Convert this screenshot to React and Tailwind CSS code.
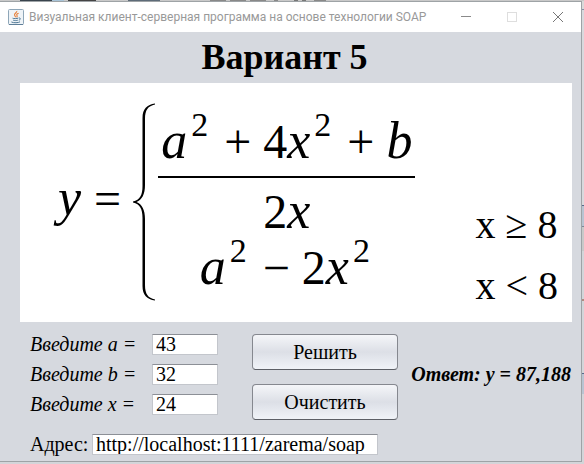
import { useState } from "react";

const FORMULA_FONT = "font-['Liberation_Serif',serif]";

function Var({ children }) {
  return <i className="text-[52px] leading-[0]">{children}</i>;
}

function Square() {
  return <sup className="static ml-1 align-[22px] text-[34px] leading-[0]">2</sup>;
}

function Op({ children }) {
  return <span className="ml-4 mr-3">{children}</span>;
}

function JavaIcon() {
  return (
    <svg width="16" height="16" viewBox="0 0 16 16" fill="none" aria-hidden="true">
      <rect x="0.5" y="0.5" width="15" height="15" rx="1" fill="#eef3f7" stroke="#8ea6b8" />
      <path d="M1 15.5H15" stroke="#5f7f99" />
      <path d="M8.8 2C9.4 3.6 5.6 4.6 6.6 6.3C6.9 6.9 7.6 7.4 7.5 8.2M10.6 4.2C8.8 4.9 8.2 5.6 9 6.5C9.5 7.1 9.2 7.7 8.5 8.2" stroke="#e8803a" strokeWidth="1.1" />
      <path d="M4.6 9.2C5.6 9.8 9 9.7 10.2 9.1M5.2 11.2C6.6 11.7 8.6 11.7 9.8 11.2M3.4 13C5.5 14.1 10.6 13.9 12 12.8M10.8 9C13 8.8 12.8 10.6 10.8 11.2" stroke="#4f7896" strokeWidth="1" />
    </svg>
  );
}

function TitleBar() {
  return (
    <header className="flex h-[30px] items-center bg-white pl-2 text-[#999]">
      <JavaIcon />
      <h2 className="ml-[5px] flex-1 whitespace-nowrap font-[Roboto,sans-serif] text-[12px]">
        Визуальная клиент-серверная программа на основе технологии SOAP
      </h2>
      <button aria-label="Свернуть" className="flex w-[46px] justify-center">
        <svg width="10" height="10" aria-hidden="true"><path d="M0 4.5H10" stroke="#8a8a8a" /></svg>
      </button>
      <button aria-label="Развернуть" disabled className="flex w-[46px] justify-center">
        <svg width="10" height="10" aria-hidden="true"><rect x="0.5" y="0.5" width="9" height="9" fill="none" stroke="#dedede" /></svg>
      </button>
      <button aria-label="Закрыть" className="flex w-[46px] justify-center">
        <svg width="10" height="10" aria-hidden="true"><path d="M0 0L10 10M10 0L0 10" stroke="#777" /></svg>
      </button>
    </header>
  );
}

function Formula() {
  return (
    <section className={`ml-5 mr-[9px] flex whitespace-nowrap bg-white pl-[38px] pr-[14px] text-[48px] leading-[52px] text-black ${FORMULA_FONT}`}>
      <div className="self-start pt-[90px]">
        <Var>y</Var>
        <span className="ml-[13px]">=</span>
      </div>
      <svg className="ml-3 mt-5 shrink-0" width="22" height="198" viewBox="0 0 22 198" aria-hidden="true">
        <path d="M22 0.5C14 1.5 9.5 6 9.5 15V83C9.5 92 7 97 0 98.5V99.5C7 101 9.5 106 9.5 115V183C9.5 192 14 196.500 22 197.500V196.500C15 195 12 191 12 182V116C12 107 9 101 3.500 99C9 97 12 91 12 82V16C12 7 15 3 22 1.500Z" fill="#000" />
      </svg>
      <div className="ml-[3px] pb-7 pt-[33px] text-center">
        <div className="border-b-2 border-black px-[3px] pb-2">
          <Var>a</Var><Square /><Op>+</Op>4<Var>x</Var><Square /><Op>+</Op><Var>b</Var>
        </div>
        <div className="mt-2">2<Var>x</Var></div>
        <div className="mt-1 pr-1">
          <Var>a</Var><Square /><Op>−</Op>2<Var>x</Var><Square />
        </div>
      </div>
      <div className="ml-auto flex flex-col justify-end pb-[6px] text-[40px] leading-[61px]">
        <p>x ≥ 8</p>
        <p>x &lt; 8</p>
      </div>
    </section>
  );
}

const INPUT =
  "h-[21px] rounded-none border border-[#c3c6cc] border-t-[#8c8f96] bg-white pb-[3px] pl-[3px] pt-[2px] text-[20px] leading-[20px] text-black outline-none";

const BUTTON =
  "h-9 w-[146px] rounded-[4px] border border-[#85888f] border-b-[#5c5f66] bg-linear-to-b from-[#f5f6f9] via-[#dcdfe6] to-[#f0f3f8] text-[20px] leading-[20px] text-black";

function NumberRow({ name, value, onChange }) {
  return (
    <div className="flex h-[21px] items-start">
      <label htmlFor={`field-${name}`} className="w-[122px] text-[20px] italic leading-[20px]">
        Введите {name} =
      </label>
      <input id={`field-${name}`} value={value} onChange={(e) => onChange(name, e.target.value)} className={`w-[66px] ${INPUT}`} />
    </div>
  );
}

function TopEdge() {
  return (
    <div className="flex h-px bg-[#c9c9c9]" aria-hidden="true">
      <span className="ml-5 w-8 bg-[#39434d]" />
      <span className="w-3 bg-[#a8c4d8]" />
      <span className="ml-1 w-7 bg-[#444]" />
      <span className="ml-8 w-8 bg-[#5d6b78]" />
      <span className="ml-[50px] w-4 bg-[#888]" />
      <span className="ml-1 w-4 bg-[#888]" />
      <span className="ml-1 w-4 bg-[#888]" />
      <span className="ml-2 w-1 bg-[#888]" />
      <span className="ml-4 w-1 bg-[#777]" />
      <span className="ml-1 w-1 bg-[#777]" />
      <span className="ml-2 w-3 bg-[#888]" />
    </div>
  );
}

function RightEdge() {
  return (
    <div className="w-[2px] shrink-0" aria-hidden="true">
      <div className="h-2 bg-[#dadada]" />
      <div className="h-px bg-[#8791a8]" />
      <div className="h-[195px] bg-[#d9d9dd]" />
      <div className="h-px bg-[#56698a]" />
      <div className="h-5 bg-[#b9c4d2]" />
      <div className="h-px bg-[#7c8798]" />
      <div className="h-6 bg-[#c9c9c9]" />
      <div className="mt-12 h-[2px] bg-[#b08a80]" />
      <div className="mt-[72px] h-px bg-[#56698a]" />
      <div className="h-5 bg-[#b9c4d2]" />
    </div>
  );
}

export default function App() {
  const [values, setValues] = useState({ a: "43", b: "32", x: "24" });
  const [address, setAddress] = useState("http://localhost:1111/zarema/soap");
  const [answer, setAnswer] = useState("87,188");

  const change = (name, value) => setValues({ ...values, [name]: value });
  const clear = () => {
    setValues({ a: "", b: "", x: "" });
    setAnswer("");
  };
  const solve = () => {
    const a = Number(values.a);
    const b = Number(values.b);
    const x = Number(values.x);
    const y = x >= 8 ? (a * a + 4 * x * x + b) / (2 * x) : a * a - 2 * x * x;
    setAnswer(y.toFixed(3).replace(".", ","));
  };

  return (
    <div className="min-h-screen bg-[#d3d5d9]">
      <TopEdge />
      <div className="flex items-start">
        <main className="min-w-0 flex-1 border-b border-r border-t border-[#9ea3a6] bg-[#d6d9df] pb-[6px] font-['Liberation_Serif',serif] text-black">
          <TitleBar />
          <h1 className="pb-[6px] pr-3 pt-[5px] text-center text-[36px] font-bold leading-[40px]">Вариант 5</h1>
          <Formula />
          <div className="flex items-start pl-[30px] pr-[10px] pt-3">
            <div className="flex flex-col gap-[9px]">
              {["a", "b", "x"].map((name) => (
                <NumberRow key={name} name={name} value={values[name]} onChange={change} />
              ))}
            </div>
            <div className="ml-[34px] flex flex-col gap-[14px]">
              <button type="button" onClick={solve} className={BUTTON}>Решить</button>
              <button type="button" onClick={clear} className={BUTTON}>Очистить</button>
            </div>
            <output className="ml-auto whitespace-nowrap pt-[30px] text-[20px] font-bold italic leading-[20px]">
              Ответ: y = {answer}
            </output>
          </div>
          <div className="flex items-start pl-[30px] pt-[14px]">
            <label htmlFor="address" className="w-[62px] text-[20px] leading-[20px]">Адрес:</label>
            <input id="address" value={address} onChange={(e) => setAddress(e.target.value)} className={`w-[286px] ${INPUT}`} />
          </div>
        </main>
        <RightEdge />
      </div>
    </div>
  );
}
